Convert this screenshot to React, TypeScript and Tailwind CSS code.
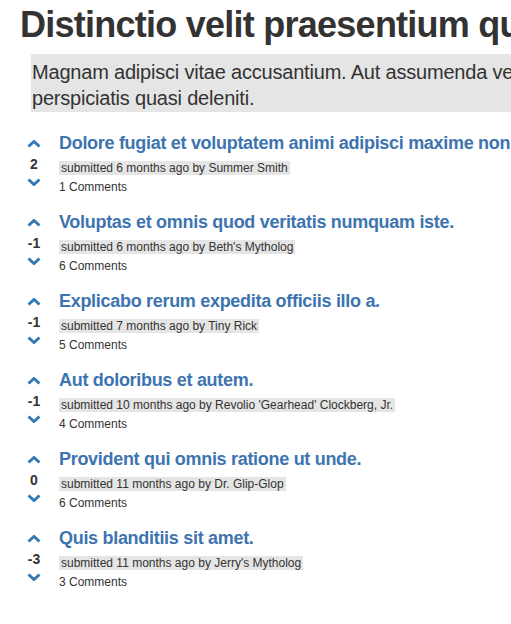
import React from "react";

type Post = {
  score: number;
  title: string;
  ago: string;
  author: string;
  comments: number;
};

const posts: Post[] = [
  { score: 2, title: "Dolore fugiat et voluptatem animi adipisci maxime non quia.", ago: "6 months", author: "Summer Smith", comments: 1 },
  { score: -1, title: "Voluptas et omnis quod veritatis numquam iste.", ago: "6 months", author: "Beth's Mytholog", comments: 6 },
  { score: -1, title: "Explicabo rerum expedita officiis illo a.", ago: "7 months", author: "Tiny Rick", comments: 5 },
  { score: -1, title: "Aut doloribus et autem.", ago: "10 months", author: "Revolio 'Gearhead' Clockberg, Jr.", comments: 4 },
  { score: 0, title: "Provident qui omnis ratione ut unde.", ago: "11 months", author: "Dr. Glip-Glop", comments: 6 },
  { score: -3, title: "Quis blanditiis sit amet.", ago: "11 months", author: "Jerry's Mytholog", comments: 3 },
];

function Chevron({ down }: { down?: boolean }) {
  return (
    <svg width="14" height="8" viewBox="0 0 14 8" className="block">
      <polyline
        points={down ? "1.5,1.5 7,6.5 12.5,1.5" : "1.5,6.5 7,1.5 12.5,6.5"}
        fill="none"
        stroke="#337ab7"
        strokeWidth="3"
      />
    </svg>
  );
}

function PostRow({ post }: { post: Post }) {
  return (
    <div className="flex">
      <div className="w-[28px] flex flex-col items-center shrink-0">
        <div className="mt-[8px]">
          <Chevron />
        </div>
        <div className="mt-[8px] text-[14px] leading-[16px] font-bold text-[#333]">{post.score}</div>
        <div className="mt-[6px]">
          <Chevron down />
        </div>
      </div>
      <div className="ml-[11px] whitespace-nowrap">
        <a className="block text-[18px] leading-[22px] font-bold tracking-[-0.3px] text-[#3d74b0]">{post.title}</a>
        <div className="mt-[7px] text-[12px] leading-[15px] text-[#333]">
          <span className="bg-[#e5e5e5] px-[2px]">
            submitted {post.ago} ago by {post.author}
          </span>
        </div>
        <div className="mt-[4px] text-[12px] leading-[15px] text-[#333]">{post.comments} Comments</div>
      </div>
    </div>
  );
}

export default function App() {
  return (
    <div
      className="min-h-screen w-screen overflow-hidden bg-white text-[#333]"
      style={{ fontFamily: '"Liberation Sans", Arial, sans-serif' }}
    >
      <div className="pl-[20px] w-[900px]">
        <h1 className="pt-[5px] text-[36px] leading-[40px] font-bold tracking-[-0.75px] whitespace-nowrap">
          Distinctio velit praesentium quae est voluptates.
        </h1>
        <div className="mt-[9px] ml-[11px] bg-[#e5e5e5] pt-[5px] pb-[1px] pl-[1px] text-[20px] leading-[26px] tracking-[-0.2px]">
          <div className="whitespace-nowrap">Magnam adipisci vitae accusantium. Aut assumenda vel ipsam eveniet</div>
          <div>perspiciatis quasi deleniti.</div>
        </div>
        <div className="mt-[20px] flex flex-col gap-[16px]">
          {posts.map((p, i) => (
            <PostRow key={i} post={p} />
          ))}
        </div>
      </div>
    </div>
  );
}
